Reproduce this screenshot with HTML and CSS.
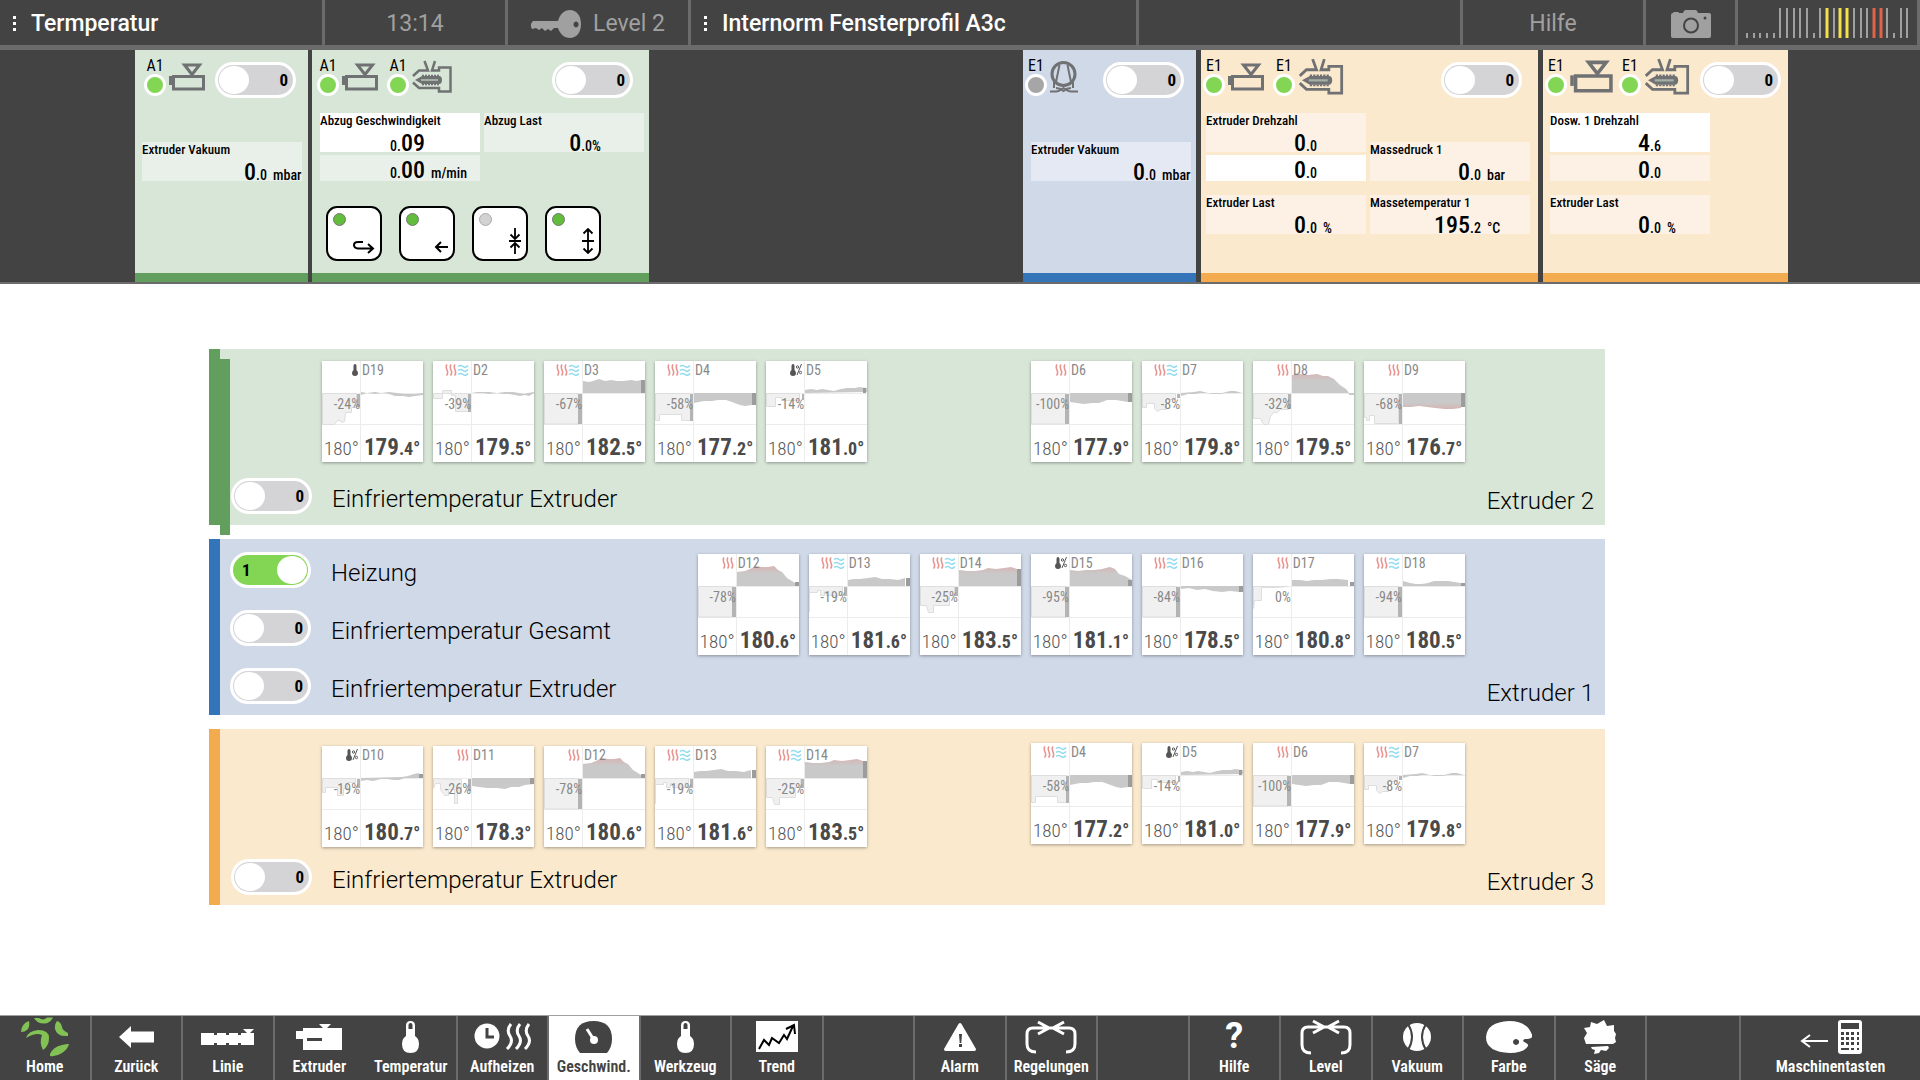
FILE: index.html
```html
<!DOCTYPE html>
<html lang="de">
<head>
<meta charset="utf-8">
<meta name="viewport" content="width=device-width, initial-scale=1">
<title>Termperatur</title>
<link rel="stylesheet" href="styles.css">
</head>
<body>
<svg class="sprite" aria-hidden="true">
  <defs>
    <linearGradient id="hot" gradientUnits="userSpaceOnUse" x1="0" y1="12" x2="0" y2="20"><stop offset="0" stop-color="#d8b4b4"/><stop offset="1" stop-color="#c9c9c9"/></linearGradient>
    <linearGradient id="hot-low" gradientUnits="userSpaceOnUse" x1="0" y1="42" x2="0" y2="48"><stop offset="0" stop-color="#c9c9c9"/><stop offset="1" stop-color="#d8b4b4"/></linearGradient>
  </defs>
  <!-- machine icons -->
  <symbol id="i-extruder" viewBox="0 0 36 28"><path d="M4.500 13.500h30v12.500h-30z" fill="none" stroke="#707173" stroke-width="3"/><path d="M0 13h3v9H0z" fill="#707173"/><path d="M15.500 2h15l-7.500 9.500z" fill="none" stroke="#707173" stroke-width="3"/></symbol>
  <symbol id="i-mold" viewBox="0 0 40 34"><g fill="none" stroke="#707173" stroke-width="2.500"><path d="M1 16l6-5.500h9L12.500 1M23 1l-3 9.500h7V7.500h11.500v24H27V28H7l-6-5.500"/></g><path d="M3 20l7-4h17q3 0 3 4t-3 4H10z" fill="#707173"/><path d="M10 15.500h18M10 24.500h18" stroke="#707173" stroke-width="1.500" stroke-dasharray="2 1"/><path d="M9 20h17" stroke="#a5b0a5" stroke-width="2"/></symbol>
  <symbol id="i-vacuum" viewBox="0 0 28 32"><g fill="none" stroke="#707173" stroke-width="3"><ellipse cx="13.500" cy="13" rx="11.500" ry="11.500"/></g><path d="M9.500 4L6 21M17.500 4L21 21M4 18v9M23 18v9" fill="none" stroke="#707173" stroke-width="2"/><path d="M0 30.500h6q3 0 7.500-3.500 4.500 3.500 7.500 3.500h7M6 27q4 0 7.500 3 3.500-3 7.500-3" fill="none" stroke="#707173" stroke-width="2"/></symbol>
  <!-- zone mode icons -->
  <symbol id="m-heat" viewBox="0 0 12 12"><path d="M2 .5q-1.500 2 0 5.500t-.5 5.500M6 .5q-1.500 2 0 5.500t-.5 5.500M10 .5q-1.500 2 0 5.500t-.5 5.500" fill="none" stroke="#e8948f" stroke-width="1.600"/></symbol>
  <symbol id="m-cool" viewBox="0 0 12 12"><path d="M1 2.500q2.500-2 5 0t5-1M1 6.500q2.500-2 5 0t5-1M1 10.500q2.500-2 5 0t5-1" fill="none" stroke="#93dcf0" stroke-width="1.600"/></symbol>
  <symbol id="m-thermo" viewBox="0 0 6 12"><path d="M1.500 2q0-2 1.500-2t1.500 2v4Q6 7.500 6 9q0 3-3 3T0 9q0-1.500 1.500-3z" fill="#555"/></symbol>
  <symbol id="m-percent" viewBox="0 0 6 12"><path d="M5.500 0L1 11" stroke="#555"/><circle cx="1.500" cy="3" r="1.200" fill="none" stroke="#555"/><circle cx="4.500" cy="8.500" r="1.200" fill="none" stroke="#555"/></symbol>
  <!-- zone trend plots -->
  <symbol id="frame" viewBox="0 0 101 101"><path d="M38.500 0v101M0 32.500h101M0 63.500h101" stroke="#ececec"/></symbol>
  <symbol id="full" viewBox="0 0 101 101"><path class="load" d="M.5 32.500h34.500v30.500H.5z"/><path class="bar" d="M34 33h4v30h-4z"/></symbol>
  <symbol id="d2" viewBox="0 0 101 101"><path class="load" d="M.5 32.500v5h9v-8h9v5h4v16h14v-18z"/><path class="bar" d="M35 33h3v18h-3z"/><path class="area" d="M39 31l5 1 6 0 6 1 8-1 6 1 6 0 6 1 5 1 5-1 4 1 5-3v-1l-6 1-4 1-5-1-6-1-8 0-8 1-8-1-7 0z"/></symbol>
  <symbol id="d3" viewBox="0 0 101 101"><path class="area" d="M39 32V20l6 1 4-1 6-2 6 2 6-1 6 1 6 0 8-1 6 1 4-1v13z"/><path class="end" d="M97 19h4v13h-4z"/></symbol>
  <symbol id="d4" viewBox="0 0 101 101"><path class="load" d="M.5 32.500v27h4v-6h22v6h9v-27z"/><path class="bar" d="M35 33h3v27h-3z"/><path class="area" d="M39 32v10l5-1 5-1 8 0 6-1 8 0 6 2 8 3 5 1 7-1V32z"/><path class="end" d="M97 32h4v12h-4z"/></symbol>
  <symbol id="d5" viewBox="0 0 101 101"><path class="load" d="M.5 32.500v13h1h8v-9h6v3h18v-7z"/><path class="bar" d="M36 33h2v6h-2z"/><path class="area" d="M39 32v-3l6-1 6 1 5-1 6 1 6 1 7-2 6-1 8 0 4-1 8 1v4z"/><path class="end" d="M97 27h3v5h-3z"/></symbol>
  <symbol id="d6" viewBox="0 0 101 101"><path class="area" d="M39 32v9l7 1 7 1 8-1 7 0 8-3 9 0 6 1 6 1V32z"/><path class="end" d="M97 32h4v9h-4z"/></symbol>
  <symbol id="d7" viewBox="0 0 101 101"><path class="load" d="M.5 32.500v14h4v-4h8v5l3 3 3-2h6v-10h9v-6z"/><path class="bar" d="M35 33h3v4h-3z"/><path class="area" d="M39 32v3l7-2 7 0 5-1 8 0 4 1h8l6-1h16l-7-2-5 0-8 2-14 0-8-2-6 1z"/></symbol>
  <symbol id="d8" viewBox="0 0 101 101"><path class="load" d="M.5 32.500v25h7l3 6h5l2-8 3-4h4l3-3h8v-16z"/><path class="bar" d="M35 33h3v15h-3z"/><path fill="url(#hot)" d="M39 32V14l8-1 8 1 9-1 6 2 5 0 6 3 6 6 6 4 3 4z"/><path class="area" d="M96 32h5v2h-5z"/></symbol>
  <symbol id="d9" viewBox="0 0 101 101"><path class="load" d="M.5 32.500v24h2v3h3v-5h5v8h24v-30z"/><path class="bar" d="M35 33h3v30h-3z"/><path fill="url(#hot-low)" d="M39 32v14l8 0 8-1 8 1 8 1 10 1 8 0 8-1V32z"/><path class="end" d="M97 32h4v14h-4z"/></symbol>
  <symbol id="d10" viewBox="0 0 101 101"><path class="load" d="M.5 32.500v14h3v-5h12v8h6v-7h4v-6h8v-4z"/><path class="bar" d="M35 33h3v9h-3z"/><path class="area" d="M39 32v3l6-1 6 1 8-2 6 0 7 1 5 0 6-2h14v-5l-5 1-6 2-6 1z"/><path class="end" d="M97 28h4v4h-4z"/></symbol>
  <symbol id="d11" viewBox="0 0 101 101"><path class="load" d="M.5 32.500v10l2-5h5v6l4 6h4v-6h6v14h3v-10h4v-14z"/><path class="bar" d="M35 33h3v12h-3z"/><path class="area" d="M39 32v8l7 1 8 1 10 0 8 1 6-2 8 0 6-2 9-1V32z"/><path class="end" d="M97 32h4v6h-4z"/></symbol>
  <symbol id="d12" viewBox="0 0 101 101"><path fill="url(#hot)" d="M39 32V18l8-1 5-2 6-3 6 1 6 0 6-1 4 4 4 2 5 6 5 3 7 5z"/><path class="end" d="M97 28h4v4h-4z"/></symbol>
  <symbol id="d13" viewBox="0 0 101 101"><path class="load" d="M.5 32.500v25v-19h8v-2h3v5h4v-4h2v4h16v-9z"/><path class="bar" d="M35 33h3v9h-3z"/><path class="area" d="M39 32v-6l6-1 6 0 8-1 7-1 7 2 8 0 8 1 7-2v8z"/><path class="end" d="M97 24h4v8h-4z"/></symbol>
  <symbol id="d14" viewBox="0 0 101 101"><path class="load" d="M.5 32.500v19h6l2 7h5v-7h16v-10h5v-9z"/><path class="bar" d="M35 33h3v9h-3z"/><path fill="url(#hot)" d="M39 32V16l8 1 8 0 8-1 5-2 8 1 8-1 7-1 6 2v17z"/><path class="end" d="M97 15h4v17h-4z"/></symbol>
  <symbol id="d15" viewBox="0 0 101 101"><path fill="url(#hot)" d="M39 32V16l8 1 8-1 8 0 8-1 8-2 5 2 4 5 6 2 7 4v6z"/><path class="end" d="M97 26h4v6h-4z"/></symbol>
  <symbol id="d16" viewBox="0 0 101 101"><path class="area" d="M39 32v3l8-1 8 2 8-1 8 2 9 1 8-1 9 1v-6z"/><path class="end" d="M97 32h4v6h-4z"/></symbol>
  <symbol id="d17" viewBox="0 0 101 101"><path class="load" d="M.5 32.500v22l1-8h7v-13h15l11-1z"/><path class="area" d="M39 32v-6l8 0 7 1 7-1 8 0 8-1 8 0 10 1v6z"/><path class="end" d="M97 28h4v4h-4z"/></symbol>
  <symbol id="d18" viewBox="0 0 101 101"><path class="area" d="M39 32v-5l7 2 6 1 6 0 6-1 6-2 8 0 6 0 6 1 7 1v3z"/><path class="end" d="M97 29h4v3h-4z"/></symbol>
  <symbol id="d19" viewBox="0 0 101 101"><path class="load" d="M.5 32.500v31h12l3-4h3l1 2 3-1 1-9h6v-5h5v-14z"/><path class="bar" d="M35 33h3v13h-3z"/><path class="area" d="M39 34l6-2 8 1 8-1 6 1 6 2 8 0 6 1 6-1 8-1v-2l-8 1-10 0-8-1-8-1-8 1-6-1-8 1-6-1z"/></symbol>
</svg>

<header class="topbar">
  <button class="topbar__item topbar__item--title"><svg width="4" height="16" viewBox="0 0 4 16"><path d="M0 0h3v3H0zM0 6h3v3H0zM0 12h3v3H0z" fill="#fff"/></svg>Termperatur</button>
  <div class="topbar__item"><time>13:14</time></div>
  <button class="topbar__item topbar__item--level"><svg width="50" height="28" viewBox="0 0 50 28"><path fill="#a0a0a0" fill-rule="evenodd" d="M27 11C29 4 33 0 39 0s11 5 11 14-5 14-11 14-10-4-12-10h-4l-3 3-3-2-3 2-3-3-3 2-3-2-4 1-2-4 3-4zM45 11.500a2.500 3 0 1 0 .1 0z"/></svg>Level 2</button>
  <button class="topbar__item topbar__item--title"><svg width="4" height="16" viewBox="0 0 4 16"><path d="M0 0h3v3H0zM0 6h3v3H0zM0 12h3v3H0z" fill="#fff"/></svg>Internorm Fensterprofil A3c</button>
  <div class="topbar__item"></div>
  <button class="topbar__item">Hilfe</button>
  <button class="topbar__item" aria-label="Screenshot"><svg width="40" height="28" viewBox="0 0 40 28"><path d="M2 3q0-1 1.500-1h3Q8 2 8 3h4l1-2q.5-1 2-1h9q1.500 0 2 1l1 2h11q2 0 2 2v21q0 2-2 2H2q-2 0-2-2V5q0-2 2-2z" fill="#a0a0a0"/><circle cx="20" cy="15.500" r="7" fill="none" stroke="#434343" stroke-width="2"/><circle cx="34" cy="8" r="1.500" fill="#434343"/></svg></button>
  <div class="topbar__item topbar__item--bars"><svg width="164" height="30" viewBox="0 0 164 30" fill="none" stroke-width="2"><path stroke="#a0a0a0" d="M1 25v5M8 25v5M14 25v5M21 25v5M28 25v5M34 0v30M41 0v30M48 0v30M54 0v30M61 0v30M68 25v5M74 0v30M88 0v30M108 0v30M115 0v30M121 0v30M141 0v30M148 25v5M155 0v30M161 0v30"/><path stroke="#f3e04a" stroke-width="3" d="M81 0v30M94 0v30M101 0v30"/><path stroke="#e0634a" stroke-width="3" d="M128 0v30M135 0v30"/></svg></div>
</header>

<section class="band" aria-label="Maschinen">
  <article class="panel panel--green panel--a">
    <div class="panel__head">
      <div class="source"><span class="source__tag">A1<i class="lamp"></i></span><svg class="ico-ex"><use href="#i-extruder"/></svg></div>
      <label class="toggle"><input type="checkbox" role="switch" aria-label="Extruder Vakuum"><span>0</span></label>
    </div>
    <div class="panel__fields">
      <div class="col col--low">
        <div class="field field--mbar"><span class="field__name">Extruder Vakuum</span><span class="field__num">0<small>.0</small></span><span class="field__unit">mbar</span></div>
      </div>
    </div>
  </article>
  <article class="panel panel--green panel--b">
    <div class="panel__head">
      <div class="source"><span class="source__tag">A1<i class="lamp"></i></span><svg class="ico-ex"><use href="#i-extruder"/></svg></div>
      <div class="source"><span class="source__tag">A1<i class="lamp"></i></span><svg class="ico-mold"><use href="#i-mold"/></svg></div>
      <label class="toggle"><input type="checkbox" role="switch" aria-label="Abzug"><span>0</span></label>
    </div>
    <div class="panel__fields">
      <div class="col">
        <div class="field field--speed field--set"><span class="field__name">Abzug Geschwindigkeit</span><span class="field__num"><small>0.</small>09</span></div>
        <div class="field field--speed field--line"><span class="field__num"><small>0.</small>00</span><span class="field__unit">m/min</span></div>
      </div>
      <div class="col">
        <div class="field field--load"><span class="field__name">Abzug Last</span><span class="field__num">0<small>.0%</small></span></div>
      </div>
    </div>
    <div class="keys">
      <button class="key" aria-label="Umkehren"><i class="key__led"></i><svg width="22" height="14" viewBox="0 0 22 14"><path d="M10 2H5Q1 2 1 5t4 3.500h15M15 4l5 4.500-5 4.500" fill="none" stroke="#000" stroke-width="2"/></svg></button>
      <button class="key" aria-label="Zurück"><i class="key__led"></i><svg width="14" height="14" viewBox="0 0 14 14"><path d="M14 7H2M7 2L2 7l5 5" fill="none" stroke="#000" stroke-width="2"/></svg></button>
      <button class="key" aria-label="Schließen"><i class="key__led key__led--off"></i><svg width="12" height="26" viewBox="0 0 12 26"><path d="M6 0v11M1.500 6.500L6 11l4.500-4.500M0 13h12M6 26V15M1.500 19.500L6 15l4.500 4.500" fill="none" stroke="#000" stroke-width="1.800"/></svg></button>
      <button class="key" aria-label="Öffnen"><i class="key__led"></i><svg width="12" height="26" viewBox="0 0 12 26"><path d="M6 1v24M1.500 5.500L6 1l4.500 4.500M0 13h12M1.500 20.500L6 25l4.500-4.500" fill="none" stroke="#000" stroke-width="1.800"/></svg></button>
    </div>
  </article>
  <article class="panel panel--blue panel--c">
    <div class="panel__head">
      <div class="source"><span class="source__tag">E1<i class="lamp lamp--off"></i></span><svg class="ico-vac"><use href="#i-vacuum"/></svg></div>
      <label class="toggle"><input type="checkbox" role="switch" aria-label="Extruder Vakuum"><span>0</span></label>
    </div>
    <div class="panel__fields">
      <div class="col col--low">
        <div class="field field--mbar"><span class="field__name">Extruder Vakuum</span><span class="field__num">0<small>.0</small></span><span class="field__unit">mbar</span></div>
      </div>
    </div>
  </article>
  <article class="panel panel--orange panel--d">
    <div class="panel__head">
      <div class="source"><span class="source__tag">E1<i class="lamp"></i></span><svg class="ico-ex"><use href="#i-extruder"/></svg></div>
      <div class="source"><span class="source__tag">E1<i class="lamp"></i></span><svg class="ico-mold ico-mold--lg"><use href="#i-mold"/></svg></div>
      <label class="toggle"><input type="checkbox" role="switch" aria-label="Extruder"><span>0</span></label>
    </div>
    <div class="panel__fields">
      <div class="col">
        <div class="field"><span class="field__name">Extruder Drehzahl</span><span class="field__num">0<small>.0</small></span></div>
        <div class="field field--line field--set"><span class="field__num">0<small>.0</small></span></div>
        <div class="field field--apart"><span class="field__name">Extruder Last</span><span class="field__num">0<small>.0</small></span><span class="field__unit">%</span></div>
      </div>
      <div class="col col--low">
        <div class="field"><span class="field__name">Massedruck 1</span><span class="field__num">0<small>.0</small></span><span class="field__unit">bar</span></div>
        <div class="field field--apart"><span class="field__name">Massetemperatur 1</span><span class="field__num">195<small>.2</small></span><span class="field__unit">°C</span></div>
      </div>
    </div>
  </article>
  <article class="panel panel--orange panel--e">
    <div class="panel__head">
      <div class="source"><span class="source__tag">E1<i class="lamp"></i></span><svg class="ico-ex ico-ex--lg"><use href="#i-extruder"/></svg></div>
      <div class="source"><span class="source__tag">E1<i class="lamp"></i></span><svg class="ico-mold ico-mold--lg"><use href="#i-mold"/></svg></div>
      <label class="toggle"><input type="checkbox" role="switch" aria-label="Dosierwerk"><span>0</span></label>
    </div>
    <div class="panel__fields">
      <div class="col">
        <div class="field field--set"><span class="field__name">Dosw. 1 Drehzahl</span><span class="field__num">4<small>.6</small></span></div>
        <div class="field field--line"><span class="field__num">0<small>.0</small></span></div>
        <div class="field field--apart"><span class="field__name">Extruder Last</span><span class="field__num">0<small>.0</small></span><span class="field__unit">%</span></div>
      </div>
    </div>
  </article>
</section>

<main class="zones">
  <section class="zone zone--green">
    <div class="zone__banks">
      <div class="bank bank--left">
        <article class="card"><svg class="card__plot"><use href="#frame"/><use href="#d19"/></svg><span class="card__mode"><svg class="thermo"><use href="#m-thermo"/></svg></span><span class="card__id">D19</span><span class="card__load">-24%</span><span class="card__set">180°</span><b class="card__act">179<small>.4°</small></b></article>
        <article class="card"><svg class="card__plot"><use href="#frame"/><use href="#d2"/></svg><span class="card__mode"><svg><use href="#m-heat"/></svg><svg><use href="#m-cool"/></svg></span><span class="card__id">D2</span><span class="card__load">-39%</span><span class="card__set">180°</span><b class="card__act">179<small>.5°</small></b></article>
        <article class="card"><svg class="card__plot"><use href="#frame"/><use href="#full"/><use href="#d3"/></svg><span class="card__mode"><svg><use href="#m-heat"/></svg><svg><use href="#m-cool"/></svg></span><span class="card__id">D3</span><span class="card__load">-67%</span><span class="card__set">180°</span><b class="card__act">182<small>.5°</small></b></article>
        <article class="card"><svg class="card__plot"><use href="#frame"/><use href="#d4"/></svg><span class="card__mode"><svg><use href="#m-heat"/></svg><svg><use href="#m-cool"/></svg></span><span class="card__id">D4</span><span class="card__load">-58%</span><span class="card__set">180°</span><b class="card__act">177<small>.2°</small></b></article>
        <article class="card"><svg class="card__plot"><use href="#frame"/><use href="#d5"/></svg><span class="card__mode"><svg class="thermo"><use href="#m-thermo"/></svg><svg class="thermo"><use href="#m-percent"/></svg></span><span class="card__id">D5</span><span class="card__load">-14%</span><span class="card__set">180°</span><b class="card__act">181<small>.0°</small></b></article>
      </div>
      <div class="bank bank--right">
        <article class="card"><svg class="card__plot"><use href="#frame"/><use href="#full"/><use href="#d6"/></svg><span class="card__mode"><svg><use href="#m-heat"/></svg></span><span class="card__id">D6</span><span class="card__load">-100%</span><span class="card__set">180°</span><b class="card__act">177<small>.9°</small></b></article>
        <article class="card"><svg class="card__plot"><use href="#frame"/><use href="#d7"/></svg><span class="card__mode"><svg><use href="#m-heat"/></svg><svg><use href="#m-cool"/></svg></span><span class="card__id">D7</span><span class="card__load">-8%</span><span class="card__set">180°</span><b class="card__act">179<small>.8°</small></b></article>
        <article class="card"><svg class="card__plot"><use href="#frame"/><use href="#d8"/></svg><span class="card__mode"><svg><use href="#m-heat"/></svg></span><span class="card__id">D8</span><span class="card__load">-32%</span><span class="card__set">180°</span><b class="card__act">179<small>.5°</small></b></article>
        <article class="card"><svg class="card__plot"><use href="#frame"/><use href="#d9"/></svg><span class="card__mode"><svg><use href="#m-heat"/></svg></span><span class="card__id">D9</span><span class="card__load">-68%</span><span class="card__set">180°</span><b class="card__act">176<small>.7°</small></b></article>
      </div>
    </div>
    <div class="zone__foot">
      <label class="switch"><span class="toggle"><input type="checkbox" role="switch"><span>0</span></span><span class="switch__text">Einfriertemperatur Extruder</span></label>
      <h2 class="zone__name">Extruder 2</h2>
    </div>
  </section>

  <section class="zone zone--blue">
    <div class="zone__switches">
      <label class="switch"><span class="toggle"><input type="checkbox" role="switch" checked><span>1</span></span><span class="switch__text">Heizung</span></label>
      <label class="switch"><span class="toggle"><input type="checkbox" role="switch"><span>0</span></span><span class="switch__text">Einfriertemperatur Gesamt</span></label>
      <label class="switch"><span class="toggle"><input type="checkbox" role="switch"><span>0</span></span><span class="switch__text">Einfriertemperatur Extruder</span></label>
    </div>
    <div class="bank">
      <article class="card"><svg class="card__plot"><use href="#frame"/><use href="#full"/><use href="#d12"/></svg><span class="card__mode"><svg><use href="#m-heat"/></svg></span><span class="card__id">D12</span><span class="card__load">-78%</span><span class="card__set">180°</span><b class="card__act">180<small>.6°</small></b></article>
      <article class="card"><svg class="card__plot"><use href="#frame"/><use href="#d13"/></svg><span class="card__mode"><svg><use href="#m-heat"/></svg><svg><use href="#m-cool"/></svg></span><span class="card__id">D13</span><span class="card__load">-19%</span><span class="card__set">180°</span><b class="card__act">181<small>.6°</small></b></article>
      <article class="card"><svg class="card__plot"><use href="#frame"/><use href="#d14"/></svg><span class="card__mode"><svg><use href="#m-heat"/></svg><svg><use href="#m-cool"/></svg></span><span class="card__id">D14</span><span class="card__load">-25%</span><span class="card__set">180°</span><b class="card__act">183<small>.5°</small></b></article>
      <article class="card"><svg class="card__plot"><use href="#frame"/><use href="#full"/><use href="#d15"/></svg><span class="card__mode"><svg class="thermo"><use href="#m-thermo"/></svg><svg class="thermo"><use href="#m-percent"/></svg></span><span class="card__id">D15</span><span class="card__load">-95%</span><span class="card__set">180°</span><b class="card__act">181<small>.1°</small></b></article>
      <article class="card"><svg class="card__plot"><use href="#frame"/><use href="#full"/><use href="#d16"/></svg><span class="card__mode"><svg><use href="#m-heat"/></svg><svg><use href="#m-cool"/></svg></span><span class="card__id">D16</span><span class="card__load">-84%</span><span class="card__set">180°</span><b class="card__act">178<small>.5°</small></b></article>
      <article class="card"><svg class="card__plot"><use href="#frame"/><use href="#d17"/></svg><span class="card__mode"><svg><use href="#m-heat"/></svg></span><span class="card__id">D17</span><span class="card__load">0%</span><span class="card__set">180°</span><b class="card__act">180<small>.8°</small></b></article>
      <article class="card"><svg class="card__plot"><use href="#frame"/><use href="#full"/><use href="#d18"/></svg><span class="card__mode"><svg><use href="#m-heat"/></svg><svg><use href="#m-cool"/></svg></span><span class="card__id">D18</span><span class="card__load">-94%</span><span class="card__set">180°</span><b class="card__act">180<small>.5°</small></b></article>
    </div>
    <h2 class="zone__name">Extruder 1</h2>
  </section>

  <section class="zone zone--orange">
    <div class="zone__banks">
      <div class="bank bank--left">
        <article class="card"><svg class="card__plot"><use href="#frame"/><use href="#d10"/></svg><span class="card__mode"><svg class="thermo"><use href="#m-thermo"/></svg><svg class="thermo"><use href="#m-percent"/></svg></span><span class="card__id">D10</span><span class="card__load">-19%</span><span class="card__set">180°</span><b class="card__act">180<small>.7°</small></b></article>
        <article class="card"><svg class="card__plot"><use href="#frame"/><use href="#d11"/></svg><span class="card__mode"><svg><use href="#m-heat"/></svg></span><span class="card__id">D11</span><span class="card__load">-26%</span><span class="card__set">180°</span><b class="card__act">178<small>.3°</small></b></article>
        <article class="card"><svg class="card__plot"><use href="#frame"/><use href="#full"/><use href="#d12"/></svg><span class="card__mode"><svg><use href="#m-heat"/></svg></span><span class="card__id">D12</span><span class="card__load">-78%</span><span class="card__set">180°</span><b class="card__act">180<small>.6°</small></b></article>
        <article class="card"><svg class="card__plot"><use href="#frame"/><use href="#d13"/></svg><span class="card__mode"><svg><use href="#m-heat"/></svg><svg><use href="#m-cool"/></svg></span><span class="card__id">D13</span><span class="card__load">-19%</span><span class="card__set">180°</span><b class="card__act">181<small>.6°</small></b></article>
        <article class="card"><svg class="card__plot"><use href="#frame"/><use href="#d14"/></svg><span class="card__mode"><svg><use href="#m-heat"/></svg><svg><use href="#m-cool"/></svg></span><span class="card__id">D14</span><span class="card__load">-25%</span><span class="card__set">180°</span><b class="card__act">183<small>.5°</small></b></article>
      </div>
      <div class="bank bank--right">
        <article class="card"><svg class="card__plot"><use href="#frame"/><use href="#d4"/></svg><span class="card__mode"><svg><use href="#m-heat"/></svg><svg><use href="#m-cool"/></svg></span><span class="card__id">D4</span><span class="card__load">-58%</span><span class="card__set">180°</span><b class="card__act">177<small>.2°</small></b></article>
        <article class="card"><svg class="card__plot"><use href="#frame"/><use href="#d5"/></svg><span class="card__mode"><svg class="thermo"><use href="#m-thermo"/></svg><svg class="thermo"><use href="#m-percent"/></svg></span><span class="card__id">D5</span><span class="card__load">-14%</span><span class="card__set">180°</span><b class="card__act">181<small>.0°</small></b></article>
        <article class="card"><svg class="card__plot"><use href="#frame"/><use href="#full"/><use href="#d6"/></svg><span class="card__mode"><svg><use href="#m-heat"/></svg></span><span class="card__id">D6</span><span class="card__load">-100%</span><span class="card__set">180°</span><b class="card__act">177<small>.9°</small></b></article>
        <article class="card"><svg class="card__plot"><use href="#frame"/><use href="#d7"/></svg><span class="card__mode"><svg><use href="#m-heat"/></svg><svg><use href="#m-cool"/></svg></span><span class="card__id">D7</span><span class="card__load">-8%</span><span class="card__set">180°</span><b class="card__act">179<small>.8°</small></b></article>
      </div>
    </div>
    <div class="zone__foot">
      <label class="switch"><span class="toggle"><input type="checkbox" role="switch"><span>0</span></span><span class="switch__text">Einfriertemperatur Extruder</span></label>
      <h2 class="zone__name">Extruder 3</h2>
    </div>
  </section>
</main>

<nav class="dock">
  <button class="dock__item"><span class="dock__icon"><svg width="48" height="40" viewBox="0 0 48 40" fill="#82c254"><path d="M13 1h5q4 3 8-.5h6q-3 6-9 6-7 0-10-5.500z"/><path d="M8 4q1 6-1.500 8.500Q4 15 0 15q0-8 8-11z"/><path d="M36 4q4 1 5 6 0 3 6 6v3q-11 1-13-7-.5-5 2-8z"/><path d="M5 21q2-7 12-8 11 0 11 8 0 8-6 12-4-7-1-15-6-3-16 3z"/><path d="M48 27q-3 0-7 1-9 2-12 9v2q6 1 12-3 6-4 7-9z"/></svg></span>Home</button>
  <button class="dock__item"><span class="dock__icon"><svg width="35" height="22" viewBox="0 0 35 22"><path d="M0 11L12 0v5.500h23v11H12V22z" fill="#fff"/></svg></span>Zurück</button>
  <button class="dock__item"><span class="dock__icon"><svg width="53" height="16" viewBox="0 0 53 16"><path d="M0 4h13v2h3V4h9v2h3V4h9v2h3V4h6l-4-4h11l-4 4h4v12H40v-2h-3v2h-9v-2h-3v2h-9v-2h-3v2H0z" fill="#fff"/></svg></span>Linie</button>
  <button class="dock__item dock__item--open"><span class="dock__icon"><svg width="46" height="26" viewBox="0 0 46 26"><path d="M0 7h7V4h20L23 0h12l-4 4h15v22H7V15H0zM11 14h15v3H11z" fill="#fff" fill-rule="evenodd"/></svg></span>Extruder</button>
  <button class="dock__item"><span class="dock__icon"><svg width="17" height="32" viewBox="0 0 17 32"><path d="M4 4.500Q4 0 8.500 0T13 4.500V15q4 2.500 4 8 0 9-8.500 9T0 23q0-5.500 4-8zM6.500 4v4h4V4q0-2-2-2t-2 2z" fill="#fff" fill-rule="evenodd"/></svg></span>Temperatur</button>
  <button class="dock__item"><span class="dock__icon"><svg width="57" height="28" viewBox="0 0 57 28"><circle cx="13" cy="13" r="12.500" fill="#fff"/><path d="M13 5v9h7" fill="none" stroke="#434343" stroke-width="3"/><path d="M37 1q-5 6-1 12t-3 13M46 1q-5 6-1 12t-3 13M55 1q-5 6-1 12t-3 13" fill="none" stroke="#fff" stroke-width="3"/></svg></span>Aufheizen</button>
  <button class="dock__item dock__item--active" aria-current="page"><span class="dock__icon"><svg width="37" height="32" viewBox="0 0 37 32"><path d="M5 32Q0 26 0 18 0 0 18.500 0T37 18q0 8-5 14z" fill="#434343"/><circle cx="19" cy="19" r="4" fill="#fff"/><path d="M12 8l7 11" stroke="#fff" stroke-width="3"/></svg></span>Geschwind.</button>
  <button class="dock__item"><span class="dock__icon"><svg width="17" height="32" viewBox="0 0 17 32"><path d="M4 4.500Q4 0 8.500 0T13 4.500V15q4 2.500 4 8 0 9-8.500 9T0 23q0-5.500 4-8zM6.500 4v4h4V4q0-2-2-2t-2 2z" fill="#fff" fill-rule="evenodd"/></svg></span>Werkzeug</button>
  <button class="dock__item"><span class="dock__icon"><svg width="42" height="31" viewBox="0 0 42 31"><path d="M0 0h42v31H0z" fill="#fff"/><path d="M3 28l5-9 5 5 3-7 7 5 5-8 3 4 6-13M30 8l8-4 1 9" fill="none" stroke="#000" stroke-width="2"/></svg></span>Trend</button>
  <div class="dock__item"></div>
  <button class="dock__item"><span class="dock__icon"><svg width="32" height="28" viewBox="0 0 32 28"><path d="M14.500 1q1.500-2 3 0L32 26q0 2-1.500 2h-29Q0 28 0 26z" fill="#fff"/><path d="M15 11h3l-.7 9h-1.600zM15 21h3v3h-3z" fill="#434343"/></svg></span>Alarm</button>
  <button class="dock__item"><span class="dock__icon"><svg width="52" height="34" viewBox="0 0 52 34"><path d="M11 32Q2 32 2 24V14q0-6 6-6h36q6 0 6 6v10q0 8-9 8M13 2l11 6-11 6M39 2L28 8l11 6" fill="none" stroke="#fff" stroke-width="3"/></svg></span>Regelungen</button>
  <div class="dock__item"></div>
  <button class="dock__item"><span class="dock__icon dock__icon--glyph">?</span>Hilfe</button>
  <button class="dock__item"><span class="dock__icon"><svg width="52" height="36" viewBox="0 0 52 36"><path d="M11 34Q2 34 2 26V14q0-6 6-6h36q6 0 6 6v12q0 8-9 8M13 2l11 6-11 6M39 2L28 8l11 6" fill="none" stroke="#fff" stroke-width="3"/></svg></span>Level</button>
  <button class="dock__item"><span class="dock__icon"><svg width="28" height="28" viewBox="0 0 28 28"><circle cx="14" cy="14" r="14" fill="#fff"/><path d="M5 1q8 13 0 26M23 1q-8 13 0 26" fill="none" stroke="#434343" stroke-width="2"/></svg></span>Vakuum</button>
  <button class="dock__item"><span class="dock__icon"><svg width="46" height="32" viewBox="0 0 46 32"><path d="M23 0q14 0 20 8 4 6 3 8-1 2-7 2-3 1-1 3 5 2 4 4-4 7-18 7Q0 31 0 16 1 1 23 0zM30 18a3 3 0 1 0 .1 0z" fill="#fff" fill-rule="evenodd"/></svg></span>Farbe</button>
  <button class="dock__item"><span class="dock__icon"><svg width="32" height="34" viewBox="0 0 32 34"><path d="M2 24L0 18l3-5-3-5 6-1 1-5 6 2 7-4 3 6 7-1 0 6 2 3-1 4 1 4-3 2zM7 27l17-1 1 2-3 3-5-1-2 3-5 1 1-4-3-1z" fill="#fff"/></svg></span>Säge</button>
  <div class="dock__item"></div>
  <button class="dock__item"><span class="dock__icon"><svg width="62" height="34" viewBox="0 0 62 34"><path d="M28 21H2M10 15l-8 6 8 6" fill="none" stroke="#fff" stroke-width="2"/><path d="M41 0h18q3 0 3 3v28q0 3-3 3H41q-3 0-3-3V3q0-3 3-3z" fill="#fff"/><path d="M41 3h18v6H41zM41 12h3v3h-3zM46 12h3v3h-3zM51 12h3v3h-3zM57 12h2v3h-2zM41 17h3v3h-3zM46 17h3v3h-3zM51 17h3v3h-3zM57 17h2v3h-2zM41 22h3v3h-3zM46 22h3v3h-3zM51 22h3v3h-3zM57 22h2v3h-2zM41 28h8v2h-8zM51 28h3v2h-3zM57 28h2v2h-2z" fill="#434343"/></svg></span>Maschinentasten</button>
</nav>
</body>
</html>
```
FILE: styles.css
```css
:root {
  --dark: #434343;
  --line: #6b6b6b;
  --muted: #a0a0a0;
  --green: #d8e6d8;
  --green-strong: #629f5e;
  --blue: #d0d9e8;
  --blue-strong: #3474b8;
  --orange: #fae9cc;
  --orange-strong: #f2ab4e;
  --condensed: "Roboto Condensed", Roboto, "Liberation Sans", sans-serif;
}

* { box-sizing: border-box; }

body {
  margin: 0;
  min-height: 100vh;
  display: flex;
  flex-direction: column;
  background: #fff;
  color: #000;
  font-family: Roboto, "Liberation Sans", sans-serif;
}

button {
  margin: 0;
  padding: 0;
  border: 0;
  background: none;
  color: inherit;
  font: inherit;
}

svg { display: block; flex: none; }
.sprite { position: absolute; width: 0; height: 0; }

/* top bar */
.topbar {
  display: grid;
  grid-template-columns: 325fr 183fr 183fr 448fr 324fr 183fr 92fr 182fr;
  height: 50px;
  background: var(--dark);
  border-bottom: 5px solid var(--line);
  color: var(--muted);
  font-size: 23px;
}
.topbar__item {
  display: flex;
  align-items: center;
  justify-content: center;
  min-width: 0;
  padding-top: 2px;
  border-right: 3px solid var(--line);
  white-space: nowrap;
}
.topbar__item--title {
  justify-content: flex-start;
  gap: 14px;
  padding-left: 13px;
  color: #fff;
  font-weight: 500;
}
.topbar__item--level { gap: 12px; }
.topbar__item--bars { padding: 0; }

/* machine band */
.band {
  display: grid;
  grid-template-columns: 135fr 173fr 4fr 337fr 374fr 173fr 5fr 337fr 5fr 245fr 132fr;
  background: var(--dark);
  border-bottom: 2px solid var(--line);
}
.panel {
  min-width: 0;
  min-height: 232px;
  padding-right: 5px;
  border-bottom: 9px solid;
}
.panel--a { grid-column: 2; padding-left: 7px; }
.panel--b { grid-column: 4; padding-left: 5px; }
.panel--c { grid-column: 6; padding-left: 2px; }
.panel--d { grid-column: 8; padding-left: 2px; }
.panel--e { grid-column: 10; padding-left: 2px; }
.panel--green { background: var(--green); border-color: var(--green-strong); --field: #e9f0e9; }
.panel--blue { background: var(--blue); border-color: var(--blue-strong); --field: #e5e9f3; }
.panel--orange { background: var(--orange); border-color: var(--orange-strong); --field: #fcf1e4; }

.panel__head {
  display: flex;
  align-items: flex-start;
  height: 63px;
  padding-top: 7px;
}
.panel--a .panel__head { padding-left: 2px; }
.panel__head .toggle { margin: 5px 7px 0 auto; }
.panel--b .toggle, .panel--d .toggle { margin-right: 11px; }
.panel--e .toggle { margin-right: 2px; }
.source {
  display: flex;
  align-items: center;
  gap: 3px;
  height: 39px;
  margin-right: 9px;
}
.source__tag {
  display: flex;
  flex-direction: column;
  align-items: center;
  font: 400 16px/17px var(--condensed);
}
.lamp {
  width: 22px;
  height: 22px;
  border: 3px solid #fff;
  border-radius: 50%;
  background: #83d653;
}
.lamp--off { background: #a6a6a6; }
.ico-ex { width: 36px; height: 28px; }
.ico-ex--lg { width: 43px; height: 33px; }
.ico-mold { width: 40px; height: 34px; }
.ico-mold--lg { width: 46px; height: 38px; }
.ico-vac { width: 28px; height: 32px; }
.panel--e .source { margin-right: 6px; }

.toggle {
  display: grid;
  flex: none;
  width: 81px;
  height: 36px;
  font: 700 17px/36px var(--condensed);
}
.toggle > * { grid-area: 1 / 1; }
.toggle input {
  appearance: none;
  width: 81px;
  height: 36px;
  margin: 0;
  padding: 1px;
  border: 3px solid #fff;
  border-radius: 18px;
  background: #d4d4d6;
}
.toggle input::before {
  content: "";
  display: block;
  width: 30px;
  height: 28px;
  border-radius: 50%;
  background: #fff;
}
.toggle input:checked { background: #83d653; }
.toggle input:checked::before { margin-left: auto; }
.toggle span { justify-self: end; padding-right: 8px; }
.toggle input:checked + span { justify-self: start; padding-left: 12px; }

.panel__fields { display: flex; gap: 4px; }
.panel--b .panel__fields, .panel--d .panel__fields { padding-left: 3px; }
.panel--c .panel__fields { padding-left: 6px; }
.panel--e .panel__fields { padding-left: 5px; }
.col {
  display: flex;
  flex-direction: column;
  gap: 3px;
  width: 160px;
  min-width: 0;
}
.col--low { padding-top: 29px; }
.field {
  display: grid;
  grid-template: 15px 24px / minmax(0, 1fr) 49px;
  background: var(--field);
  font-family: var(--condensed);
  white-space: nowrap;
}
.field--set { background: #fff; }
.field--line { grid-template-rows: 26px; }
.field--apart { margin-top: 11px; }
.field--mbar { grid-template-columns: minmax(0, 1fr) 35px; }
.field--speed { grid-template-columns: minmax(0, 1fr) 55px; }
.field--load { grid-template-columns: minmax(0, 1fr) 43px; }
.field__name {
  grid-column: 1 / -1;
  font-size: 13px;
  font-weight: 500;
  line-height: 16px;
}
.field__num {
  grid-column: 1;
  text-align: right;
  font-size: 24px;
  font-weight: 500;
  line-height: 30px;
}
.field__num small, .field__unit { font-size: 14px; font-weight: 500; }
.field__unit { padding-left: 6px; line-height: 36px; }

.keys { display: flex; gap: 17px; margin: 25px 0 0 9px; }
.key {
  display: flex;
  flex-direction: column;
  justify-content: space-between;
  width: 56px;
  height: 55px;
  padding: 5px;
  border: 2px solid #000;
  border-radius: 11px;
  background: #fff;
}
.key svg { align-self: flex-end; }
.key__led {
  width: 13px;
  height: 13px;
  border: 1px solid #777;
  border-radius: 50%;
  background: #62bd3c;
}
.key__led--off { background: #d2d2d2; border-color: #aaa; }

/* zones */
.zones {
  flex: 1;
  display: grid;
  grid-template-columns: minmax(0, 1fr);
  align-content: start;
  gap: 14px;
  padding: 65px 315px 24px 209px;
}
.zone { position: relative; min-height: 176px; }
.zone--green { background: var(--green); border-left: 11px solid var(--green-strong); }
.zone--blue { background: var(--blue); border-left: 11px solid var(--blue-strong); }
.zone--orange { background: var(--orange); border-left: 11px solid var(--orange-strong); }
.zone--green::before {
  content: "";
  position: absolute;
  top: 10px;
  left: 0;
  width: 10px;
  height: 100%;
  background: var(--green-strong);
}
.zone__banks {
  display: grid;
  grid-template-columns: 102px 545px minmax(0, 164fr) 434px minmax(0, 140fr);
  padding-top: 12px;
}
.zone--orange .zone__banks { padding-top: 14px; }
.zone--orange .bank--left { padding-top: 3px; }
.bank { display: flex; gap: 10px; align-items: flex-start; }
.bank--left { grid-column: 2; }
.bank--right { grid-column: 4; }
.zone__foot {
  display: flex;
  align-items: flex-start;
  justify-content: space-between;
  padding: 16px 11px 0;
}
.zone--orange .zone__foot { padding-top: 12px; }
.zone__name {
  margin: 0;
  padding-top: 9px;
  font-size: 24px;
  font-weight: 300;
  line-height: 28px;
}
.zone--blue {
  display: grid;
  grid-template: 116px 1fr / minmax(0, 477fr) 767px minmax(0, 140fr);
}
.zone--blue .bank { padding-top: 15px; }
.zone--blue .zone__name { grid-column: 2 / -1; justify-self: end; padding: 24px 11px 0 0; }
.zone__switches {
  grid-row: 1 / 3;
  display: flex;
  flex-direction: column;
  gap: 22px;
  padding: 13px 0 0 10px;
}
.switch {
  display: flex;
  align-items: center;
  gap: 20px;
  font-size: 24px;
  font-weight: 300;
  line-height: 28px;
  white-space: nowrap;
}
.switch__text { padding-top: 6px; }

/* zone card */
.card {
  position: relative;
  display: grid;
  grid-template: 32px 31px 38px / 38px 63px;
  width: 101px;
  height: 101px;
  background: #fff;
  box-shadow: 0 1px 3px rgba(0, 0, 0, .35);
  color: #888;
  font: 400 14px/18px var(--condensed);
  white-space: nowrap;
}
.card > * { position: relative; }
.card .card__plot { position: absolute; top: 0; left: 0; width: 101px; height: 101px; }
.card__mode { display: flex; justify-content: flex-end; padding: 3px 2px 0 0; }
.card__mode svg { width: 12px; height: 12px; }
.card__mode .thermo { width: 6px; }
.card__id { padding-left: 2px; }
.card__load { padding-top: 2px; grid-column: 1; justify-self: end; }
.card__set { grid-column: 1; padding-left: 2px; font-size: 19px; font-weight: 300; line-height: 50px; color: #555; }
.card__act { padding-left: 4px; font-size: 23px; font-weight: 700; line-height: 48px; color: #4a4a4a; }
.card__act small { font-size: 18px; }

.load { fill: #f0f0f0; stroke: #dedede; }
.bar { fill: #b4b4b4; }
.area { fill: #c9c9c9; }
.end { fill: #9c9c9c; }

/* bottom dock */
.dock {
  display: grid;
  grid-template-columns: repeat(18, minmax(0, 183fr)) minmax(0, 188fr) minmax(0, 358fr);
  height: 65px;
  background: var(--dark);
  border-top: 1px solid var(--muted);
  color: #fff;
  font: 600 16px/20px var(--condensed);
}
.dock__item {
  display: flex;
  flex-direction: column;
  align-items: center;
  border-right: 2px solid var(--line);
  white-space: nowrap;
}
.dock__item--open { border-right-color: transparent; }
.dock__item:last-child { border-right: 0; }
.dock__item--active { background: #fff; color: var(--dark); }
.dock__icon {
  display: flex;
  align-items: center;
  justify-content: center;
  height: 41px;
}
.dock__icon--glyph { font: 700 36px/41px Roboto, "Liberation Sans", sans-serif; }
```
